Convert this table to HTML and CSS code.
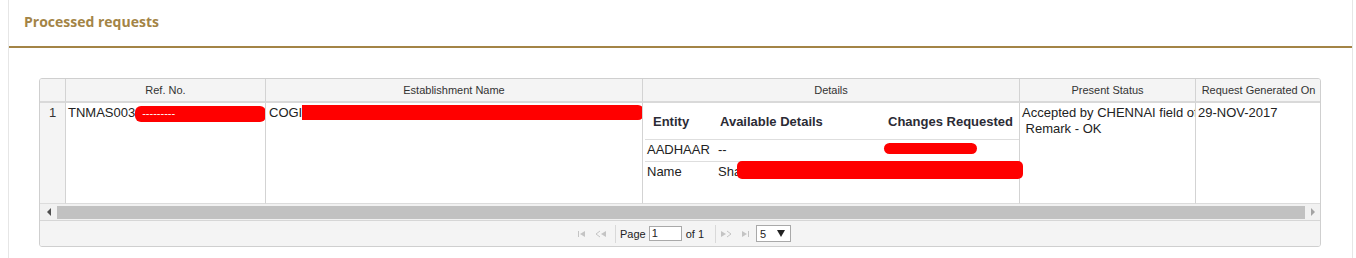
FILE: index.html
```html
<!DOCTYPE html>
<html>
<head>
<meta charset="utf-8">
<title>Processed requests</title>
<link rel="stylesheet" href="styles.css">
</head>
<body>
<div class="panel">
  <div class="panel-head"><h3 class="panel-title">Processed requests</h3></div>
  <div class="panel-body">
    <div class="grid">
      <div class="grid-view">
        <table class="grid-table">
          <colgroup>
            <col class="c-rn"><col class="c-ref"><col class="c-est"><col class="c-det"><col class="c-st"><col class="c-date">
          </colgroup>
          <thead>
            <tr>
              <th class="hc"></th>
              <th class="hc">Ref. No.</th>
              <th class="hc">Establishment Name</th>
              <th class="hc">Details</th>
              <th class="hc">Present Status</th>
              <th class="hc last">Request Generated On</th>
            </tr>
          </thead>
          <tbody>
            <tr class="row">
              <td class="rn">1</td>
              <td class="cell"><span class="nw">TNMAS003<span class="redact r-ref"><span class="dash">---------</span></span></span></td>
              <td class="cell"><span class="nw">COGI<span class="redact r-est"></span></span></td>
              <td class="cell det">
                <table class="inner">
                  <colgroup><col class="i1"><col class="i2"><col class="i3"></colgroup>
                  <thead>
                    <tr><th class="ih ih1">Entity</th><th class="ih ih2">Available Details</th><th class="ih ih3">Changes Requested</th></tr>
                  </thead>
                  <tbody>
                    <tr class="ir"><td class="id id1">AADHAAR</td><td class="id id2">--</td><td class="id id3"><span class="redact r-chg"></span></td></tr>
                    <tr class="ir last-ir"><td class="id id1">Name</td><td class="id id2 name-cell">Sha<span class="redact r-name"></span></td><td class="id id3"></td></tr>
                  </tbody>
                </table>
              </td>
              <td class="cell st"><div class="nw">Accepted by CHENNAI field office</div><div class="nw">&nbsp;Remark - OK</div></td>
              <td class="cell last">29-NOV-2017</td>
            </tr>
          </tbody>
        </table>
      </div>
      <div class="hscroll">
        <div class="sb-btn"><svg width="6" height="8" viewBox="0 0 6 8"><path d="M5 0 L1 4 L5 8 Z" fill="#505050"/></svg></div>
        <div class="sb-track"><div class="sb-thumb"></div></div>
        <div class="sb-btn"><svg width="6" height="8" viewBox="0 0 6 8"><path d="M1 0 L5 4 L1 8 Z" fill="#a3a3a3"/></svg></div>
      </div>
      <div class="pager">
        <div class="pg-icons">
          <span class="pg-ico"><svg width="10" height="8" viewBox="0 0 10 8"><rect x="1" y="1" width="1" height="6" fill="#c4c4c4"/><path d="M8 1 L3 4 L8 7 Z" fill="#c4c4c4"/></svg></span>
          <span class="pg-ico"><svg width="12" height="8" viewBox="0 0 12 8"><path d="M5 1 L1 4 L5 7" fill="none" stroke="#c4c4c4" stroke-width="1"/><path d="M11 1 L6 4 L11 7 Z" fill="#c4c4c4"/></svg></span>
        </div>
        <span class="pg-sep"></span>
        <span class="pg-text">Page</span><span class="pg-input">1</span><span class="pg-text">of 1</span>
        <span class="pg-sep"></span>
        <div class="pg-icons">
          <span class="pg-ico"><svg width="12" height="8" viewBox="0 0 12 8"><path d="M1 1 L6 4 L1 7 Z" fill="#c4c4c4"/><path d="M7 1 L11 4 L7 7" fill="none" stroke="#c4c4c4" stroke-width="1"/></svg></span>
          <span class="pg-ico"><svg width="10" height="8" viewBox="0 0 10 8"><path d="M2 1 L7 4 L2 7 Z" fill="#c4c4c4"/><rect x="8" y="1" width="1" height="6" fill="#c4c4c4"/></svg></span>
        </div>
        <span class="pg-select"><span>5</span><svg width="8" height="7" viewBox="0 0 8 7"><path d="M0 0 L8 0 L4 7 Z" fill="#222"/></svg></span>
      </div>
    </div>
  </div>
</div>
</body>
</html>
```
FILE: styles.css
```css
html, body {
  margin: 0;
  padding: 0;
  background: #ffffff;
}
body {
  font-family: "Liberation Sans", Arial, sans-serif;
  color: #222;
}
.panel {
  margin-left: 8px;
  width: 1343px;
  height: 258px;
  border-left: 1px solid #e6e6e6;
  border-right: 1px solid #e6e6e6;
}
.panel-head {
  height: 48px;
  box-sizing: border-box;
  padding: 12px 0 0 15px;
  border-bottom: 2px solid #a38446;
}
.panel-title {
  margin: 0;
  font-family: "Open Sans", "Liberation Sans", sans-serif;
  font-weight: 700;
  font-size: 14px;
  line-height: 19px;
  color: #a38446;
}
.panel-body {
  padding: 30px 0 0 30px;
}
.grid {
  width: 1282px;
  box-sizing: border-box;
  border: 1px solid #cfcfcf;
  border-radius: 3px;
  overflow: hidden;
  background: #fff;
}
.grid-view {
  overflow: hidden;
}
.grid-table {
  table-layout: fixed;
  width: 1281px;
  border-collapse: separate;
  border-spacing: 0;
}
.c-rn { width: 26px; }
.c-ref { width: 200px; }
.c-est { width: 377px; }
.c-det { width: 377px; }
.c-st { width: 176px; }
.c-date { width: 125px; }
.hc {
  height: 22px;
  padding: 0;
  box-sizing: content-box;
  background: #f4f4f4;
  border-right: 1px solid #d3d3d3;
  border-bottom: 2px solid #d9d9d9;
  font-weight: 400;
  font-size: 11px;
  line-height: 13px;
  padding-top: 1px;
  height: 21px;
  color: #333;
  text-align: center;
  vertical-align: middle;
  white-space: nowrap;
  overflow: hidden;
}
.hc.last, .cell.last { border-right: 0; }
.row { height: 101px; }
.rn {
  padding: 2px 0 0 0;
  background: #f4f4f4;
  border-right: 1px solid #d3d3d3;
  border-bottom: 1px solid #dcdcdc;
  font-size: 13px;
  line-height: 16px;
  text-align: center;
  vertical-align: top;
  color: #333;
}
.cell {
  padding: 2px 0 0 2px;
  border-right: 1px solid #d3d3d3;
  border-bottom: 1px solid #dcdcdc;
  font-size: 13px;
  line-height: 16px;
  vertical-align: top;
  overflow: hidden;
  color: #222;
}
.cell:nth-child(3) { padding-left: 3px; }
.nw { white-space: nowrap; }
.redact {
  display: inline-block;
  background: #ff0000;
  vertical-align: top;
}
.r-ref {
  width: 131px;
  height: 16px;
  border-radius: 6px;
  margin-top: 1px;
  position: relative;
}
.dash {
  position: absolute;
  left: 7px;
  top: 1px;
  color: #fff;
  font-size: 11px;
  line-height: 12px;
}
.r-est {
  width: 342px;
  height: 15px;
  border-radius: 0 6px 6px 0;
  margin-top: 0;
}
.r-chg {
  width: 93px;
  height: 11px;
  border-radius: 6px;
  margin-left: -2px;
  margin-top: 1px;
}
.det {
  padding: 2px 0 0 2px;
  overflow: visible;
  position: relative;
}
.inner {
  table-layout: fixed;
  width: 374px;
  border-collapse: collapse;
}
.i1 { width: 69px; }
.i2 { width: 168px; }
.i3 { width: 137px; }
.ih {
  height: 34px;
  box-sizing: border-box;
  padding: 0;
  font-size: 13px;
  font-weight: 700;
  color: #2b2b35;
  text-align: left;
  vertical-align: middle;
  border-bottom: 1px solid #dedede;
  white-space: nowrap;
}
.ih1 { padding-left: 8px; }
.ih2 { padding-left: 6px; }
.ih3 { padding-left: 6px; }
.id {
  height: 22px;
  box-sizing: border-box;
  padding: 0 0 0 2px;
  font-size: 13px;
  color: #222;
  border-bottom: 1px solid #dedede;
  vertical-align: middle;
  white-space: nowrap;
}
.id2 { padding-left: 4px; }
.id3 { padding-left: 4px; }
.last-ir .id { border-bottom: 0; }
.name-cell { position: relative; overflow: visible; }
.r-name {
  position: absolute;
  left: 23px;
  top: -1px;
  width: 286px;
  height: 18px;
  border-radius: 5px;
  z-index: 2;
}
.st { padding-left: 2px; }
.hscroll {
  display: flex;
  height: 16px;
  background: #f1f1f1;
  border-bottom: 1px solid #d6d6d6;
}
.sb-btn {
  width: 17px;
  display: flex;
  align-items: center;
  justify-content: center;
}
.sb-btn:last-child { width: 15px; }
.sb-track {
  flex: 1;
  display: flex;
  align-items: center;
}
.sb-thumb {
  flex: 1;
  height: 13px;
  background: #c1c1c1;
}
.pager {
  height: 25px;
  background: #f4f4f4;
  display: flex;
  align-items: center;
  justify-content: center;
  padding-left: 8px;
  font-size: 11px;
  color: #222;
}
.pg-icons {
  display: flex;
  align-items: center;
  gap: 8px;
}
.pg-ico {
  display: flex;
  align-items: center;
}
.pg-sep {
  width: 1px;
  height: 18px;
  background: #d9d9d9;
  margin: 0 4px 0 8px;
}
.pg-text { margin-right: 3px; }
.pg-input {
  width: 29px;
  height: 13px;
  border: 1px solid #a9a9a9;
  background: #fff;
  line-height: 13px;
  padding-left: 2px;
  box-sizing: content-box;
  margin-right: 4px;
  font-size: 11px;
}
.pg-select {
  margin-left: 6px;
  border: 1px solid #a9a9a9;
  background: #fff;
  display: flex;
  align-items: center;
  justify-content: space-between;
  padding: 0 5px 0 3px;
  box-sizing: border-box;
  width: 35px;
  height: 17px;
}
```
